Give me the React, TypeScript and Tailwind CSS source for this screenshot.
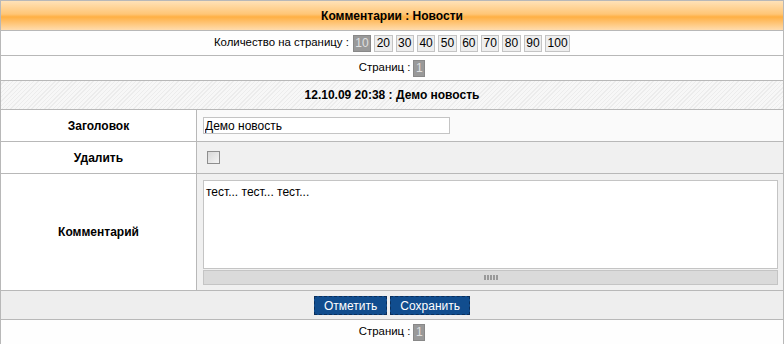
import React from "react";

const sizes = ["10", "20", "30", "40", "50", "60", "70", "80", "90", "100"];

function PageBox({ label, active }: { label: string; active?: boolean }) {
  return (
    <span
      className={
        active
          ? "inline-flex h-[17px] items-center border border-[#888] bg-[#999] px-[1.5px] text-[12px] text-[#e0e0e0]"
          : "inline-flex h-[17px] items-center border border-[#c4c4c4] bg-[#eeeeee] px-[1.5px] text-[12px] text-black"
      }
    >
      {label}
    </span>
  );
}

export default function App() {
  return (
    <div className="w-[784px] bg-white font-['Liberation_Sans',Arial,sans-serif] text-[12px] text-black">
      <div className="border border-b-0 border-[#b8b8b8]">
        {/* header */}
        <div className="flex h-[29px] items-center justify-center bg-[linear-gradient(to_bottom,#ffe2b8,#ffc676_45%,#ffb044_55%,#ffdcae)] font-bold">
          Комментарии : Новости
        </div>

        <div className="flex h-[25px] items-center justify-center gap-[3px] border-t border-[#b8b8b8] bg-[#fefefe] text-[11.4px]">
          <span className="mr-[1px]">Количество на страницу :</span>
          {sizes.map((s) => (
            <PageBox key={s} label={s} active={s === "10"} />
          ))}
        </div>

        <div className="flex h-[25px] items-center justify-center gap-[3px] border-t border-[#b8b8b8] bg-[#fefefe] text-[11.4px]">
          <span>Страниц :</span>
          <PageBox label="1" active />
        </div>

        <div className="flex h-[29px] items-center justify-center border-t border-[#b8b8b8] bg-[repeating-linear-gradient(135deg,#f7f7f7_0px,#f7f7f7_2px,#ececec_2px,#ececec_3px)] font-bold">
          12.10.09 20:38 : Демо новость
        </div>

        {/* form */}
        <div className="grid grid-cols-[196px_1fr] border-t border-[#b8b8b8]">
          <div className="flex h-[31px] items-center justify-center border-r border-[#b8b8b8] bg-white font-bold">
            Заголовок
          </div>
          <div className="flex h-[31px] items-center bg-[#fafafa] pl-[6px]">
            <input
              defaultValue="Демо новость"
              className="h-[17px] w-[247px] border border-[#c4c4c4] bg-white px-[1px] text-[12px] outline-none"
            />
          </div>

          <div className="flex h-[32px] items-center justify-center border-t border-r border-[#b8b8b8] bg-white font-bold">
            Удалить
          </div>
          <div className="flex h-[32px] items-center border-t border-[#b8b8b8] bg-[#f0f0f0] pl-[10px]">
            <span className="h-[13px] w-[13px] border border-[#8e8e8e] bg-[linear-gradient(135deg,#d8d8d8,#f4f4f4)]" />
          </div>

          <div className="flex h-[117px] items-center justify-center border-t border-r border-[#b8b8b8] bg-white font-bold">
            Комментарий
          </div>
          <div className="flex h-[117px] flex-col border-t border-[#b8b8b8] bg-[#f0f0f0] pl-[6px] pr-[5px] pt-[6px]">
            <div className="h-[89px] border border-[#c4c4c4] bg-white px-[2px] pt-[2px]">тест... тест... тест...</div>
            <div className="mt-[1px] flex h-[15px] items-center justify-center border border-[#c4c4c4] bg-[#dadada]">
              <span className="h-[5px] w-[14px] bg-[repeating-linear-gradient(90deg,#999_0px,#999_2px,#dadada_2px,#dadada_3px)]" />
            </div>
          </div>
        </div>

        <div className="flex h-[29px] items-center justify-center gap-[3px] border-t border-[#b8b8b8] bg-[#eeeeee]">
          <button className="h-[19px] border border-dashed border-[#0a2f5c] bg-[#114d8e] px-[9px] text-[12px] text-white">
            Отметить
          </button>
          <button className="h-[19px] border border-dashed border-[#0a2f5c] bg-[#114d8e] px-[9px] text-[12px] text-white">
            Сохранить
          </button>
        </div>

        <div className="flex h-[25px] items-center justify-center gap-[3px] border-t border-[#b8b8b8] bg-[#fefefe] text-[11.4px]">
          <span>Страниц :</span>
          <PageBox label="1" active />
        </div>
      </div>
    </div>
  );
}
